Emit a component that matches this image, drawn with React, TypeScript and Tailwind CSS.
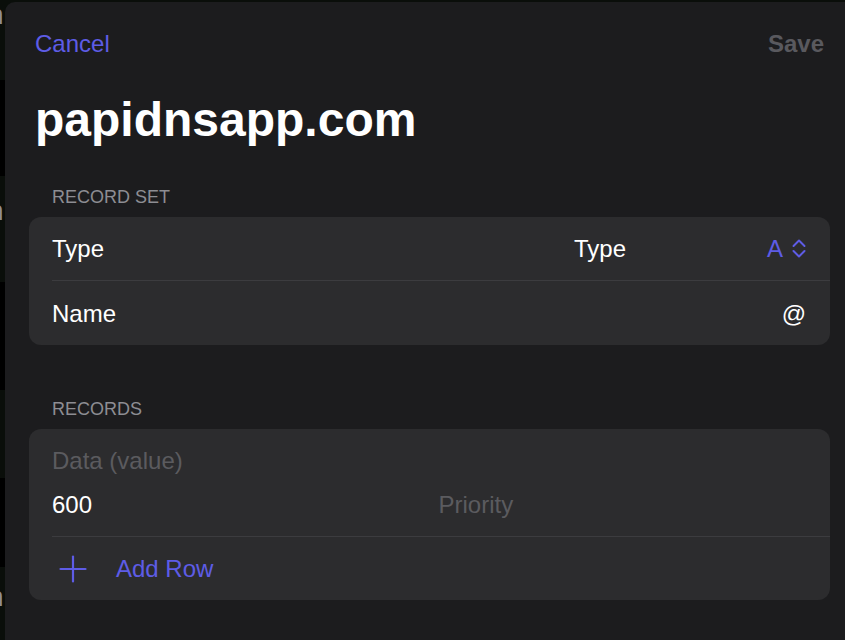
import React from "react";

function Fragment({ top }: { top: string }) {
  return (
    <span
      className={`${top} -ml-[12px] block whitespace-nowrap text-[28px] leading-[28px] text-[#8e8e93]`}
    >
      n
    </span>
  );
}

function ChevronUpDown() {
  return (
    <svg width="14" height="19" viewBox="0 0 14 19" fill="none" stroke="#5e5ce6" strokeWidth="2" strokeLinecap="round" strokeLinejoin="round">
      <path d="M1.5 7 L7 1.5 L12.5 7" />
      <path d="M1.5 12 L7 17.5 L12.5 12" />
    </svg>
  );
}

function PlusIcon() {
  return (
    <svg width="28" height="28" viewBox="0 0 28 28" fill="none" stroke="#5e5ce6" strokeWidth="2.2" strokeLinecap="round">
      <path d="M14 1.5 V26.5" />
      <path d="M1.5 14 H26.5" />
    </svg>
  );
}

export default function App() {
  return (
    <div className="flex h-[640px] w-[845px] overflow-hidden bg-[#0a0e0a] font-['Liberation_Sans',Arial,sans-serif]">
      {/* backdrop strip */}
      <div className="flex w-[5px] shrink-0 flex-col overflow-hidden">
        <div className="h-[80px] shrink-0 bg-[#0a0e0a]">
          <Fragment top="mt-[1px]" />
        </div>
        <div className="h-[96px] shrink-0 bg-black" />
        <div className="h-[106px] shrink-0 bg-[#0a0e0a]">
          <Fragment top="mt-[21px]" />
        </div>
        <div className="h-[108px] shrink-0 bg-black" />
        <div className="h-[88px] shrink-0 bg-[#0a0e0a]" />
        <div className="h-[89px] shrink-0 bg-black" />
        <div className="h-[73px] shrink-0 bg-[#0a0e0a]">
          <Fragment top="mt-[16px]" />
        </div>
      </div>

      {/* sheet */}
      <div className="mt-[2px] min-w-0 flex-1 rounded-tl-[10px] bg-[#1c1c1e] pt-[26px]">
        <div className="flex items-center justify-between pl-[30px] pr-[21px] text-[24px] leading-[32px]">
          <span className="text-[#5e5ce6]">Cancel</span>
          <span className="font-bold text-[#59595e]">Save</span>
        </div>

        <h1 className="mt-[32px] pl-[30px] text-[48px] font-bold leading-[56px] text-white">
          papidnsapp.com
        </h1>

        <div className="ml-[24px] mr-[15px]">
          <div className="mt-[37px] pl-[23px] text-[18px] leading-[24px] text-[#8d8d93]">
            RECORD SET
          </div>
          <div className="mt-[8px] overflow-hidden rounded-[12px] bg-[#2c2c2e] text-[24px] leading-[29px] text-white">
            <div className="flex h-[63px] items-center justify-between pl-[23px] pr-[24px]">
              <span>Type</span>
              <div className="flex w-[232px] items-center justify-between">
                <span>Type</span>
                <div className="flex items-center gap-[9px]">
                  <span className="text-[#5e5ce6]">A</span>
                  <ChevronUpDown />
                </div>
              </div>
            </div>
            <div className="ml-[23px] h-px bg-[#3c3c3f]" />
            <div className="flex h-[64px] items-center justify-between pl-[23px] pr-[24px]">
              <span>Name</span>
              <span>@</span>
            </div>
          </div>

          <div className="mt-[52px] pl-[23px] text-[18px] leading-[24px] text-[#8d8d93]">
            RECORDS
          </div>
          <div className="mt-[8px] overflow-hidden rounded-[12px] bg-[#2c2c2e] text-[24px] leading-[32px]">
            <div className="pb-[15px] pl-[23px] pr-[5px] pt-[16px]">
              <div className="text-[#5b5b5f]">Data (value)</div>
              <div className="mt-[12px] grid grid-cols-2">
                <span className="text-white">600</span>
                <span className="text-[#5b5b5f]">Priority</span>
              </div>
            </div>
            <div className="ml-[23px] h-px bg-[#3c3c3f]" />
            <div className="flex h-[63px] items-center pl-[30px]">
              <PlusIcon />
              <span className="ml-[29px] text-[#5e5ce6]">Add Row</span>
            </div>
          </div>
        </div>
      </div>
    </div>
  );
}
